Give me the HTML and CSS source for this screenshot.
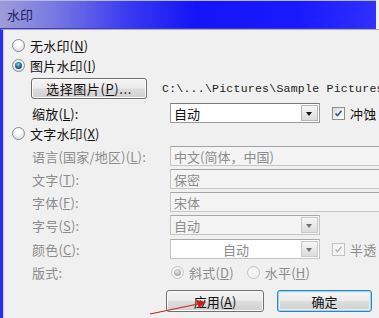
FILE: index.html
```html
<!DOCTYPE html>
<html lang="zh-CN">
<head>
<meta charset="utf-8">
<title>水印</title>
<link rel="stylesheet" href="styles.css">
</head>
<body>
<div class="win">
  <div class="titlebar"><span class="title">水印</span></div>
  <div class="frame">
    <div class="content">
      <div class="row r1">
        <span class="radio"></span><span class="txt">无水印(<u>N</u>)</span>
      </div>
      <div class="row">
        <span class="radio on"></span><span class="txt">图片水印(<u>I</u>)</span>
      </div>
      <div class="row btnrow">
        <button class="btn pick">选择图片(<u>P</u>)...</button>
        <span class="path">C:\...\Pictures\Sample Pictures</span>
      </div>
      <div class="row field-row r-scale">
        <span class="label">缩放(<u>L</u>):</span>
        <div class="combo"><span class="ctext">自动</span><span class="arrow"></span></div>
        <span class="chk on"><svg viewBox="0 0 13 13"><path d="M3 6.5 L5.3 9 L10 3.2" /></svg></span>
        <span class="txt">冲蚀</span>
      </div>
      <div class="row">
        <span class="radio"></span><span class="txt">文字水印(<u>X</u>)</span>
      </div>
      <div class="row field-row r-lang dis">
        <span class="label">语言(国家/地区)(<u>L</u>):</span>
        <div class="edit">中文(简体，中国)</div>
      </div>
      <div class="row field-row dis">
        <span class="label">文字(<u>T</u>):</span>
        <div class="edit">保密</div>
      </div>
      <div class="row field-row dis">
        <span class="label">字体(<u>F</u>):</span>
        <div class="edit">宋体</div>
      </div>
      <div class="row field-row dis">
        <span class="label">字号(<u>S</u>):</span>
        <div class="combo dcombo"><span class="ctext">自动</span><span class="arrow"></span></div>
      </div>
      <div class="row field-row r-color dis">
        <span class="label">颜色(<u>C</u>):</span>
        <div class="combo wcombo"><span class="ctext center">自动</span><span class="arrow"></span></div>
        <span class="chk on dchk"><svg viewBox="0 0 13 13"><path d="M3 6.5 L5.3 9 L10 3.2" /></svg></span>
        <span class="txt">半透</span>
      </div>
      <div class="row field-row dis">
        <span class="label">版式:</span>
        <span class="radio on drad"></span><span class="txt opt">斜式(<u>D</u>)</span>
        <span class="radio drad2"></span><span class="txt opt">水平(<u>H</u>)</span>
      </div>
      <div class="row actions">
        <button class="btn apply">应用(<u>A</u>)</button>
        <button class="btn ok">确定</button>
      </div>
    </div>
  </div>
  <svg class="anno" width="379" height="318" viewBox="0 0 379 318">
    <line x1="150" y1="314" x2="198" y2="304" stroke="#c42828" stroke-width="1.2"/>
    <path d="M206 302 L196 300 L199 308 Z" fill="#d01818"/>
  </svg>
</div>
</body>
</html>
```

FILE: styles.css
```css
html, body {
  margin: 0;
  padding: 0;
}
body {
  width: 379px;
  height: 318px;
  overflow: hidden;
  background: #f3f3f6;
  font-family: "Noto Sans CJK SC", "Liberation Sans", sans-serif;
  font-size: 13px;
  color: #111;
}
.win {
  position: relative;
  width: 379px;
  height: 318px;
  display: flex;
  flex-direction: column;
}
.titlebar {
  height: 29px;
  margin-right: 3px;
  background: linear-gradient(to right, #9c9cd8 0%, #7a7ae2 14%, #3a3af2 34%, #1414f6 52%, #1a1aff 80%, #3030ff 100%);
  border-top: 1px solid #b8b8e8;
  border-bottom: 1px solid #3c3cb8;
  display: flex;
  align-items: center;
  box-sizing: border-box;
  flex: none;
}
.title {
  margin-left: 7px;
  color: #1c1c58;
  font-size: 13px;
  margin-top: -1px;
}
.frame {
  flex: 1;
  border-left: 3px solid #2c2cf0;
  border-top: 1px solid #a8a8d8;
  background: #f0f0f0;
  display: flex;
}
.content {
  flex: 1;
  border-left: 1px solid #d0d0e4;
  padding-left: 8px;
  padding-top: 5px;
  display: flex;
  flex-direction: column;
}
.row {
  height: 20px;
  display: flex;
  align-items: center;
  white-space: nowrap;
  flex: none;
}
.txt {
  margin-left: 5px;
  line-height: 1;
  letter-spacing: 0.2px;
}
u { text-decoration: underline; text-underline-offset: 1px; }

.radio {
  width: 13px;
  height: 13px;
  box-sizing: border-box;
  border-radius: 50%;
  border: 1px solid #8a8b8c;
  background: radial-gradient(circle at 50% 35%, #ffffff 20%, #dedede 80%);
  position: relative;
  flex: none;
}
.radio.on::after {
  content: "";
  position: absolute;
  left: 2px;
  top: 2px;
  width: 7px;
  height: 7px;
  border-radius: 50%;
  background: radial-gradient(circle at 45% 35%, #9ad8f0 0%, #2a7aa8 40%, #0e3c5c 90%);
}

.btnrow {
  height: 21px;
  margin-top: 3px;
}
.btn {
  font-family: "Noto Sans CJK SC", "Liberation Sans", sans-serif;
  font-size: 13px;
  color: #111;
  border: 1px solid #707070;
  border-radius: 3px;
  background: linear-gradient(to bottom, #f4f4f4 0%, #ebebeb 48%, #dddddd 52%, #cfcfcf 100%);
  box-shadow: inset 0 0 0 1px #fbfbfb;
  padding: 0;
  line-height: 1;
  height: 21px;
  box-sizing: border-box;
  cursor: default;
}
.pick {
  margin-left: 19px;
  width: 116px;
  letter-spacing: 0.6px;
}
.path {
  margin-left: 15px;
  font-family: "Liberation Mono", monospace;
  font-size: 11.5px;
  letter-spacing: 0.25px;
  color: #222;
}

.field-row .label {
  width: 138px;
  margin-left: 20px;
  flex: none;
  line-height: 1;
  letter-spacing: 0.2px;
}
.r-scale {
  margin-top: 4px;
}
.field-row.dis {
  margin-top: 3px;
}
.r-color.dis { margin-top: 4px; }
.dis .label, .dis .txt {
  color: #8c8c8c;
}

.combo {
  width: 150px;
  height: 20px;
  box-sizing: border-box;
  border: 1px solid #9a9a9a;
  border-top-color: #7a7a7a;
  background: #fff;
  display: flex;
  align-items: center;
  flex: none;
}
.ctext {
  flex: 1;
  padding-left: 3px;
  line-height: 1;
}
.ctext.center {
  text-align: center;
  padding-left: 0;
}
.arrow {
  width: 17px;
  height: 16px;
  margin-right: 1px;
  box-sizing: border-box;
  border: 1px solid #b8b8b8;
  background: linear-gradient(to bottom, #f6f6f6, #dcdcdc);
  position: relative;
  flex: none;
}
.arrow::after {
  content: "";
  position: absolute;
  left: 4px;
  top: 6px;
  border-left: 3.5px solid transparent;
  border-right: 3.5px solid transparent;
  border-top: 4px solid #111;
}
.dcombo {
  background: #f4f4f4;
  border-color: #c4c4c4;
  border-top-color: #a8a8a8;
}
.dcombo .ctext, .wcombo .ctext {
  color: #8c8c8c;
}
.dcombo .arrow, .wcombo .arrow {
  border-color: #c8c8c8;
}
.dcombo .arrow::after, .wcombo .arrow::after {
  border-top-color: #707070;
}
.wcombo {
  border-color: #c4c4c4;
  border-top-color: #a8a8a8;
}

.edit {
  width: 214px;
  height: 20px;
  box-sizing: border-box;
  border: 1px solid #c6c6c6;
  border-top-color: #a4a4a4;
  background: #f4f4f4;
  color: #8c8c8c;
  padding-left: 3px;
  display: flex;
  align-items: center;
  line-height: 1;
  flex: none;
}

.chk {
  width: 13px;
  height: 13px;
  box-sizing: border-box;
  border: 1px solid #8e8f8f;
  background: linear-gradient(135deg, #d6d6d6 0%, #f4f4f4 60%, #ffffff 100%);
  margin-left: 12px;
  flex: none;
  display: flex;
}
.chk svg {
  width: 11px;
  height: 11px;
}
.chk path {
  fill: none;
  stroke: #2f4f9a;
  stroke-width: 1.8;
}
.dchk {
  border-color: #c2c2c2;
  background: #f4f4f4;
}
.dchk path {
  stroke: #b4b4b4;
}

.drad {
  margin-left: 1px;
  border-color: #c2c2c2;
  background: #f4f4f4;
}
.drad.on::after {
  background: radial-gradient(circle at 45% 35%, #e6e6e6 0%, #b0b0b0 60%, #9a9a9a 100%);
}
.drad2 {
  margin-left: 13px;
  border-color: #c2c2c2;
  background: #f4f4f4;
}
.opt {
  margin-left: 5px;
}

.actions {
  margin-top: 8px;
  height: 22px;
  padding-left: 154px;
  gap: 13px;
}
.apply {
  width: 98px;
  height: 22px;
}
.ok {
  width: 95px;
  height: 22px;
  border-color: #3c7fb1;
  box-shadow: inset 0 0 0 1px #9ad6f0, inset 0 0 0 2px #e0f2fb;
}

.anno {
  position: absolute;
  left: 0;
  top: 0;
  pointer-events: none;
}
```
